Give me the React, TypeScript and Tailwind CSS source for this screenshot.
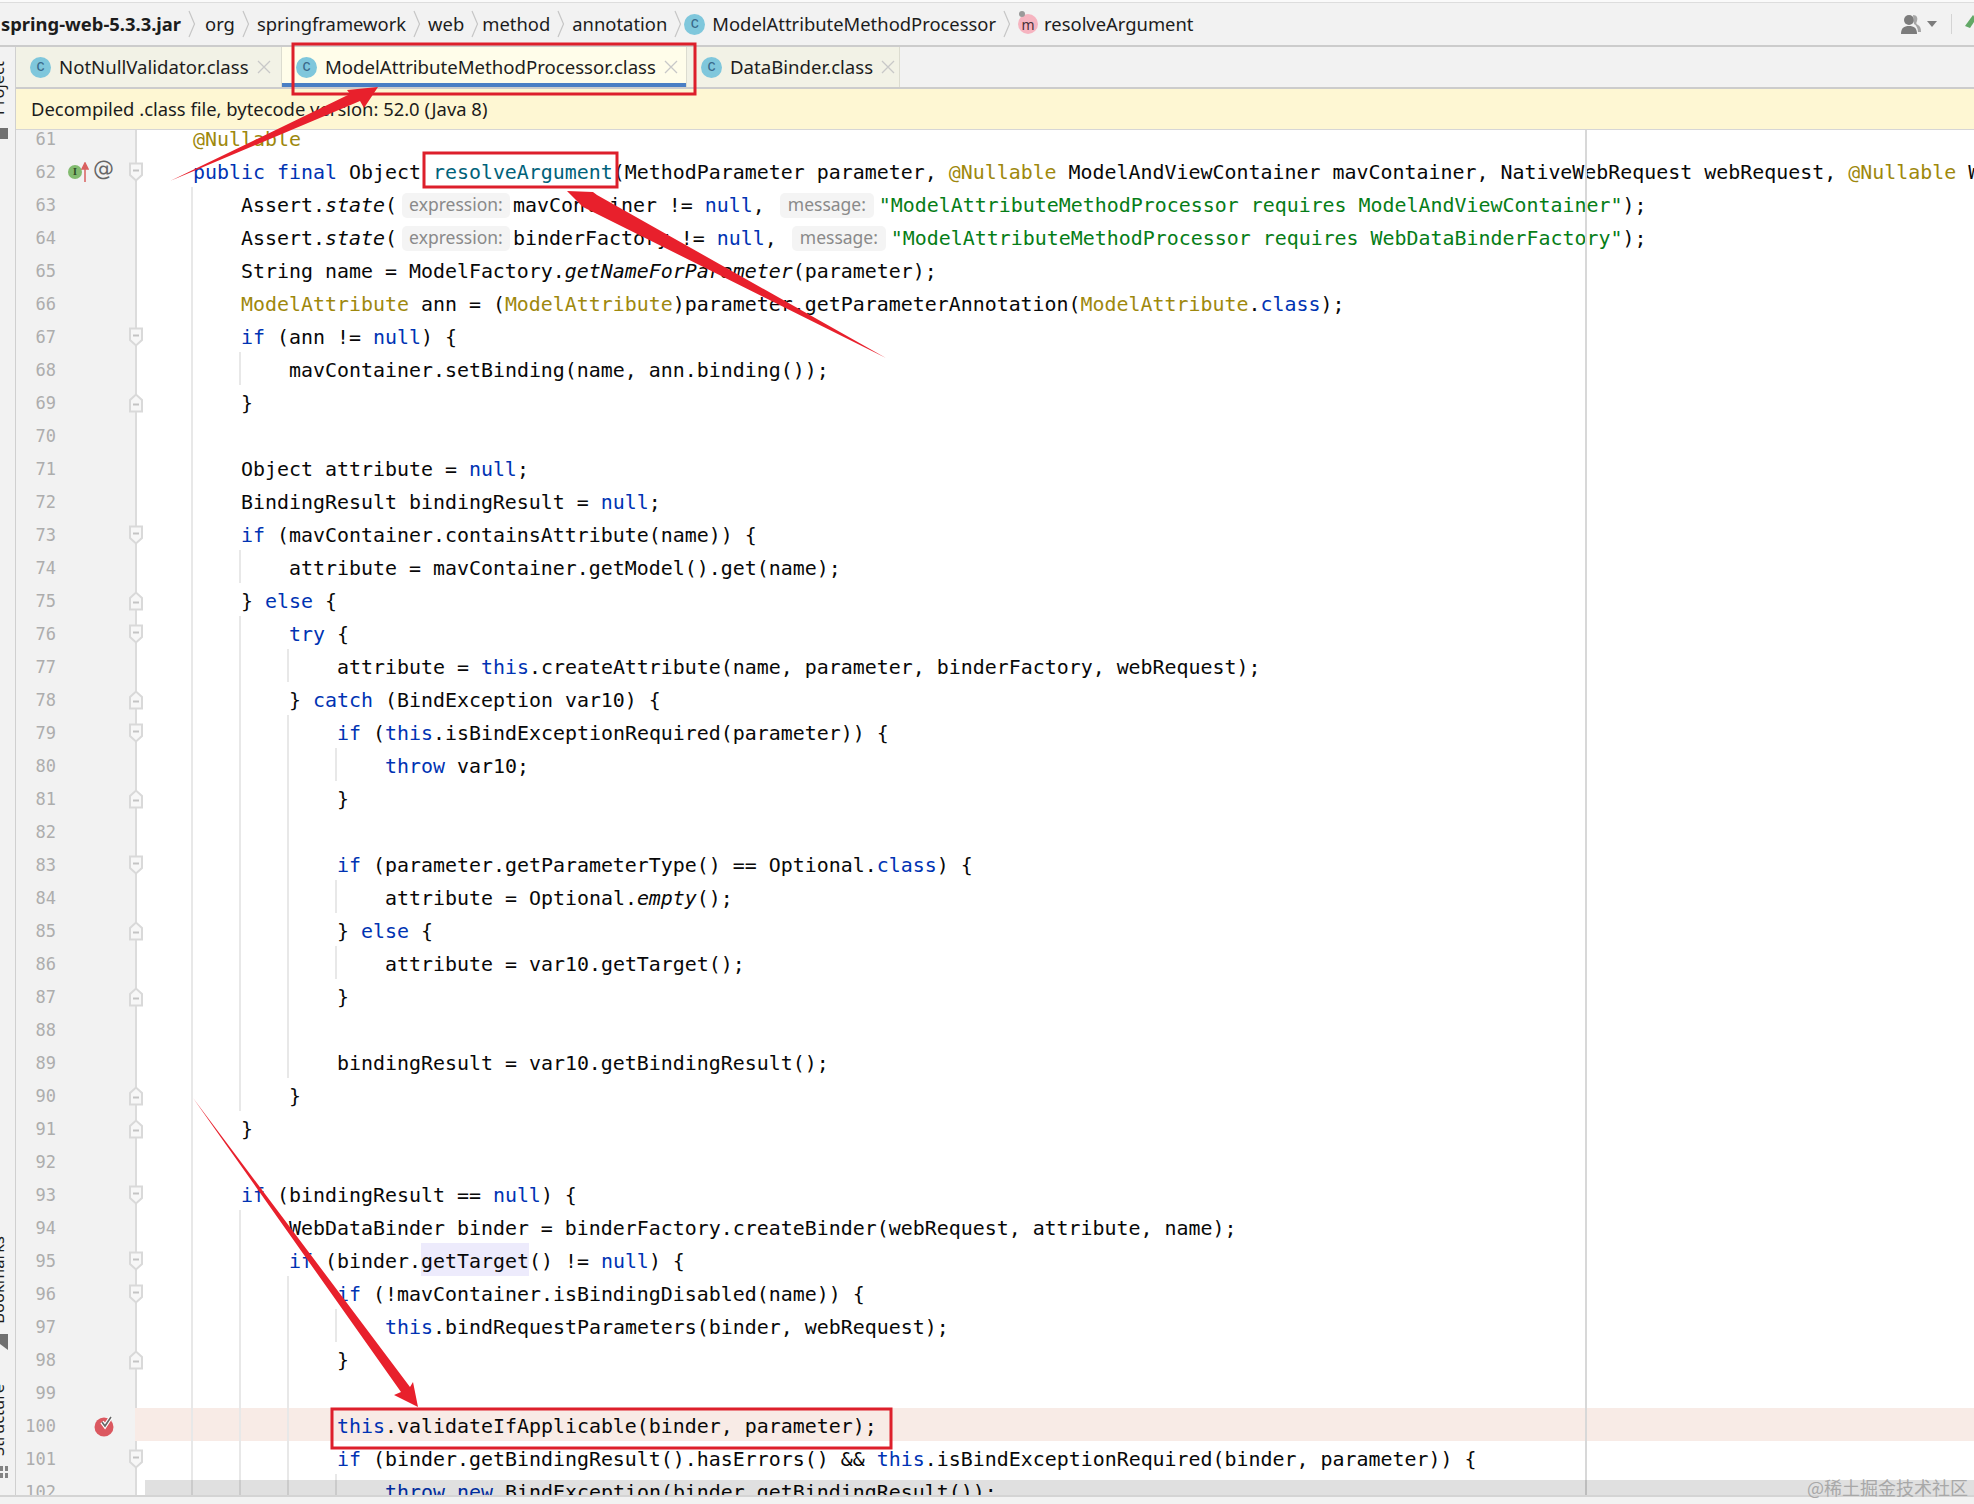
import React from 'react';

const LINES: [number, number, string][] = [
  [61, 0, '@Nullable'],
  [62, 0, 'public final Object resolveArgument(MethodParameter parameter, @Nullable ModelAndViewContainer mavContainer, NativeWebRequest webRequest, @Nullable WebDataBinderFactory binderFactory) throws Exception {'],
  [63, 1, 'Assert.state(§expression§mavContainer != null, ¶message¶"ModelAttributeMethodProcessor requires ModelAndViewContainer");'],
  [64, 1, 'Assert.state(§expression§binderFactory != null, ¶message¶"ModelAttributeMethodProcessor requires WebDataBinderFactory");'],
  [65, 1, 'String name = ModelFactory.getNameForParameter(parameter);'],
  [66, 1, 'ModelAttribute ann = (ModelAttribute)parameter.getParameterAnnotation(ModelAttribute.class);'],
  [67, 1, 'if (ann != null) {'],
  [68, 2, 'mavContainer.setBinding(name, ann.binding());'],
  [69, 1, '}'],
  [70, 1, ''],
  [71, 1, 'Object attribute = null;'],
  [72, 1, 'BindingResult bindingResult = null;'],
  [73, 1, 'if (mavContainer.containsAttribute(name)) {'],
  [74, 2, 'attribute = mavContainer.getModel().get(name);'],
  [75, 1, '} else {'],
  [76, 2, 'try {'],
  [77, 3, 'attribute = this.createAttribute(name, parameter, binderFactory, webRequest);'],
  [78, 2, '} catch (BindException var10) {'],
  [79, 3, 'if (this.isBindExceptionRequired(parameter)) {'],
  [80, 4, 'throw var10;'],
  [81, 3, '}'],
  [82, 3, ''],
  [83, 3, 'if (parameter.getParameterType() == Optional.class) {'],
  [84, 4, 'attribute = Optional.empty();'],
  [85, 3, '} else {'],
  [86, 4, 'attribute = var10.getTarget();'],
  [87, 3, '}'],
  [88, 3, ''],
  [89, 3, 'bindingResult = var10.getBindingResult();'],
  [90, 2, '}'],
  [91, 1, '}'],
  [92, 1, ''],
  [93, 1, 'if (bindingResult == null) {'],
  [94, 2, 'WebDataBinder binder = binderFactory.createBinder(webRequest, attribute, name);'],
  [95, 2, 'if (binder.getTarget() != null) {'],
  [96, 3, 'if (!mavContainer.isBindingDisabled(name)) {'],
  [97, 4, 'this.bindRequestParameters(binder, webRequest);'],
  [98, 3, '}'],
  [99, 3, ''],
  [100, 3, 'this.validateIfApplicable(binder, parameter);'],
  [101, 3, 'if (binder.getBindingResult().hasErrors() && this.isBindExceptionRequired(binder, parameter)) {'],
  [102, 4, 'throw new BindException(binder.getBindingResult());'],
];

const FOLD_DOWN = [62, 67, 73, 76, 79, 83, 93, 95, 96, 101];
const FOLD_UP = [69, 75, 78, 81, 85, 87, 90, 91, 98];

const TOKEN = /("[^"]*"|§[^§]+§|¶[^¶]+¶|@Nullable|\b(?:public|final|if|else|try|catch|throws|throw|new|null|this|class)\b|\bModelAttribute\b|\b(?:state|getNameForParameter|empty)\b|\bresolveArgument\b|binder\.getTarget)/;

function Token({ text }: { text: string }) {
  if (text.startsWith('"')) return <span className="text-[#067d17]">{text}</span>;
  if (text.startsWith('§')) {
    return (
      <span className="inline-flex items-center justify-center w-[108px] h-[25px] ml-[5px] mr-[3px] pb-[2px] -translate-y-[1px] rounded-[5px] bg-[#f4f4f4] text-[#8a8a8a] font-['Noto_Sans'] text-[17.5px] align-middle">
        {text.slice(1, -1)}:
      </span>
    );
  }
  if (text.startsWith('¶')) {
    return (
      <span className="inline-flex items-center justify-center w-[94px] h-[25px] ml-[3px] mr-[5px] pb-[2px] -translate-y-[1px] rounded-[5px] bg-[#f4f4f4] text-[#8a8a8a] font-['Noto_Sans'] text-[17.5px] align-middle">
        {text.slice(1, -1)}:
      </span>
    );
  }
  if (text === '@Nullable' || text === 'ModelAttribute') return <span className="text-[#9e880d]">{text}</span>;
  if (text === 'resolveArgument') return <span className="text-[#00627a]">{text}</span>;
  if (text === 'state' || text === 'getNameForParameter' || text === 'empty') return <span className="italic">{text}</span>;
  if (text === 'binder.getTarget') {
    return (
      <>
        binder.<span className="pt-[7px] pb-[3px] bg-[#edebfc]">getTarget</span>
      </>
    );
  }
  if (TOKEN.test(text)) return <span className="text-[#0033b3]">{text}</span>;
  return <>{text}</>;
}

function Fold({ up }: { up: boolean }) {
  return (
    <svg width="16" height="20" viewBox="0 0 16 20" className="absolute -right-[9px] top-[8px]">
      <path
        d={up ? 'M2 18.5H14V7L8 1.5L2 7Z' : 'M2 1.5H14V13L8 18.5L2 13Z'}
        fill="#f7f7f7"
        stroke="#d9d9d9"
        strokeWidth="2"
      />
      <path d={up ? 'M5 11.5H11' : 'M5 8.5H11'} stroke="#c4c4c4" strokeWidth="2" />
    </svg>
  );
}

function ClassIcon() {
  return (
    <span className="flex items-center justify-center w-[21px] h-[21px] pb-[2px] rounded-full bg-[#7fc7dc] text-[#39698a] text-[16px] font-['Liberation_Sans'] shrink-0">
      c
    </span>
  );
}

function Chevron() {
  return (
    <svg width="8" height="28" viewBox="0 0 8 28" className="shrink-0 mx-[7px]">
      <path d="M1 1L6.5 14L1 27" fill="none" stroke="#c6c6c6" strokeWidth="1.2" />
    </svg>
  );
}

function CloseIcon() {
  return (
    <svg width="14" height="14" viewBox="0 0 14 14" className="ml-[8px] shrink-0">
      <path d="M1 1L13 13M13 1L1 13" stroke="#c8c8c8" strokeWidth="1.3" />
    </svg>
  );
}

function GutterIcons({ n }: { n: number }) {
  if (n === 62) {
    return (
      <div className="flex items-center ml-[12px] pt-[2px]">
        <span className="flex items-center justify-center w-[14px] h-[14px] rounded-full bg-[#82bb6f] text-[#2e4a26] text-[10px] font-['Liberation_Serif'] font-bold">
          I
        </span>
        <svg width="8" height="20" viewBox="0 0 8 20" className="-ml-[1px]">
          <path d="M4 20V3M1 7L4 1L7 7Z" fill="#d9605f" stroke="#d9605f" strokeWidth="1.5" />
        </svg>
        <span className="ml-[4px] -mt-[3px] text-[#666] text-[21px] font-['DejaVu_Sans']">@</span>
      </div>
    );
  }
  if (n === 100) {
    return (
      <svg width="20" height="22" viewBox="0 0 20 22" className="ml-[38px] mt-[2px]">
        <circle cx="10" cy="12" r="9.5" fill="#db5860" />
        <path d="M8 7L11 11L17 2" fill="none" stroke="#fff" strokeWidth="4" />
        <path d="M8 7L11 11L17 2" fill="none" stroke="#666" strokeWidth="1.6" />
      </svg>
    );
  }
  return null;
}

function CodeLine({ n, level, code }: { n: number; level: number; code: string }) {
  const parts = code.split(TOKEN).filter(Boolean);
  const down = FOLD_DOWN.includes(n);
  const up = FOLD_UP.includes(n);
  return (
    <div className="flex h-[33px] shrink-0">
      <div className={`relative flex items-center w-[121px] shrink-0 bg-[#f2f2f2] border-r-2 ${n === 100 ? 'border-[#f8ebe6]' : 'border-[#dcdcdc]'}`}>
        <span className="w-[40px] shrink-0 pt-[4px] text-right text-[#adadad] text-[17px]">{n}</span>
        <GutterIcons n={n} />
        {(down || up) && <Fold up={up} />}
      </div>
      <div className={`flex flex-1 min-w-0 pl-[54px] ${n === 100 ? 'bg-[#f8ebe6]' : ''}`}>
        {Array.from({ length: level }).map((_, i) => (
          <span key={i} className="w-[48px] h-[33px] shrink-0 border-l-2 border-[#e8e8e8]" />
        ))}
        <span className="whitespace-pre pl-[2px] pt-[2px] leading-[33px] text-[#080808]">
          {parts.map((p, i) => (
            <Token key={i} text={p} />
          ))}
        </span>
      </div>
    </div>
  );
}

function Tab({ label, width, active }: { label: string; width: string; active?: boolean }) {
  return (
    <div
      className={`flex items-center h-full pl-[14px] border-r border-[#dcdcd0] ${width} ${
        active ? 'bg-[#fffdea] shadow-[inset_0_-4px_0_#4a7fc4]' : 'bg-[#f2f2e6]'
      }`}
    >
      <ClassIcon />
      <span className="ml-[8px] text-[18.6px] text-[#1c1c1c]">{label}</span>
      <CloseIcon />
    </div>
  );
}

function SideLabel({ text }: { text: string }) {
  return (
    <span className="block w-[18px] -ml-[11px] [writing-mode:vertical-rl] rotate-180 text-[16.5px] leading-[18px] text-[#1c1c1c] whitespace-nowrap">
      {text}
    </span>
  );
}

export default function App() {
  return (
    <div className="relative flex flex-col w-[1974px] h-[1504px] overflow-hidden bg-[#f2f2f2] font-['Noto_Sans',sans-serif]">
      {/* Breadcrumb */}
      <div className="h-[3px] bg-[#fafafa] border-b border-[#dddddd]" />
      <div className="flex items-center h-[44px] shrink-0 pl-[1px] pr-[8px] bg-[#f2f2f2] border-b-2 border-[#cccccc] text-[18.4px] text-[#1c1c1c]">
        <span className="font-bold">spring-web-5.3.3.jar</span>
        <Chevron />
        <span className="ml-[2px]">org</span>
        <Chevron />
        <span>springframework</span>
        <Chevron />
        <span>web</span>
        <Chevron />
        <span className="-ml-[4px]">method</span>
        <Chevron />
        <span>annotation</span>
        <Chevron />
        <span className="-ml-[5px]">
          <ClassIcon />
        </span>
        <span className="ml-[7px]">ModelAttributeMethodProcessor</span>
        <Chevron />
        <span className="relative flex items-center justify-center w-5 h-5 rounded-full bg-[#f6b4c0] text-[#4a3038] text-[14px] shrink-0">
          m
          <span className="absolute -top-[3px] left-[1px] w-[6px] h-[6px] rounded-full bg-[#9a9a9a]" />
        </span>
        <span className="ml-[6px]">resolveArgument</span>
        <div className="flex items-center ml-auto">
          <svg width="20" height="22" viewBox="0 0 20 22">
            <circle cx="8" cy="7" r="5" fill="#7c7c7c" />
            <path d="M0 21C0 15 3 13 8 13C13 13 16 15 16 21Z" fill="#7c7c7c" />
            <path d="M12 2C16 2 17 5 16 8C15 10 15 11 17 12C19 13 20 15 20 19H17C17 15 15 12 13 11Z" fill="#a6a6a6" />
          </svg>
          <svg width="12" height="8" viewBox="0 0 12 8" className="ml-[5px]">
            <path d="M1 1H11L6 7Z" fill="#7c7c7c" />
          </svg>
          <span className="w-px h-[20px] ml-[13px] bg-[#d4d4d4]" />
          <svg width="16" height="24" viewBox="0 0 16 24" className="ml-[13px] -mr-[15px]">
            <path d="M0 14L8 3L11 7L5 16Z" fill="#62a866" />
          </svg>
        </div>
      </div>

      <div className="flex flex-1 min-h-0">
        {/* Tool window stripe */}
        <div className="flex flex-col w-[16px] shrink-0 overflow-hidden bg-[#f2f2f2] border-r border-[#d0d0d0]">
          <div className="mt-[14px]">
            <SideLabel text="Project" />
          </div>
          <span className="block w-[8px] h-[11px] mt-[13px] bg-[#707070]" />
          <div className="mt-auto">
            <SideLabel text="Bookmarks" />
          </div>
          <svg width="8" height="16" viewBox="0 0 8 16" className="mt-[10px] shrink-0">
            <path d="M0 0H8V16L0 10Z" fill="#707070" />
          </svg>
          <div className="mt-[34px]">
            <SideLabel text="Structure" />
          </div>
          <div className="grid grid-cols-2 gap-[2px] w-[8px] mt-[10px] mb-[17px] opacity-70">
            <span className="h-[5px] bg-[#555]" />
            <span className="h-[5px] bg-[#555]" />
            <span className="h-[5px] bg-[#555]" />
            <span className="h-[5px] bg-[#555]" />
          </div>
        </div>

        <div className="flex flex-col flex-1 min-w-0">
          {/* Editor tabs */}
          <div className="flex h-[42px] shrink-0 border-b-2 border-[#cccccc]">
            <Tab label="NotNullValidator.class" width="w-[266px]" />
            <Tab label="ModelAttributeMethodProcessor.class" width="w-[405px]" active />
            <Tab label="DataBinder.class" width="w-[213px]" />
          </div>

          {/* Notification */}
          <div className="flex items-center h-[41px] shrink-0 pl-[15px] bg-[#fef7d3] border-b border-[#d6d6d6] text-[18.4px] text-[#1c1c1c]">
            Decompiled .class file, bytecode version: 52.0 (Java 8)
          </div>

          {/* Editor */}
          <div className="relative flex-1 min-h-0 overflow-hidden bg-white">
            <div className="flex flex-col -mt-[9px] font-['DejaVu_Sans_Mono',monospace] text-[19.93px]">
              {LINES.map(([n, level, code]) => (
                <CodeLine key={n} n={n} level={level} code={code} />
              ))}
            </div>
            <div className="absolute top-0 bottom-0 left-[1569px] w-[2px] bg-[#d8d8d8]" />
            <div className="absolute left-[129px] right-0 bottom-0 h-[15px] bg-black/12" />
          </div>
        </div>
      </div>

      <div className="h-[9px] shrink-0 bg-[#f2f2f2] border-t-2 border-[#d4d4d4]" />

      <span className="absolute right-[6px] bottom-[8px] text-[18px] leading-none text-[#a8a8a8] font-['Noto_Sans_CJK_SC',sans-serif]">
        @稀土掘金技术社区
      </span>

      {/* Red annotations */}
      <svg width="1974" height="1504" viewBox="0 0 1974 1504" className="absolute inset-0 pointer-events-none">
        <g fill="none" stroke="#dd1f2b" strokeWidth="3">
          <rect x="293" y="44" width="402" height="50" />
          <rect x="424" y="153" width="193" height="34" />
          <rect x="332" y="1409" width="559" height="39" />
        </g>
        <g fill="#e8202c">
          <polygon points="170,181 350,94 347,90 378,87 364,108 360,101" />
          <polygon points="886,358 597,195 593,192 567,191 582,206 583,207" />
          <polygon points="193,1098 410,1387 413,1382 418,1407 394,1395 401,1392" />
        </g>
      </svg>
    </div>
  );
}
